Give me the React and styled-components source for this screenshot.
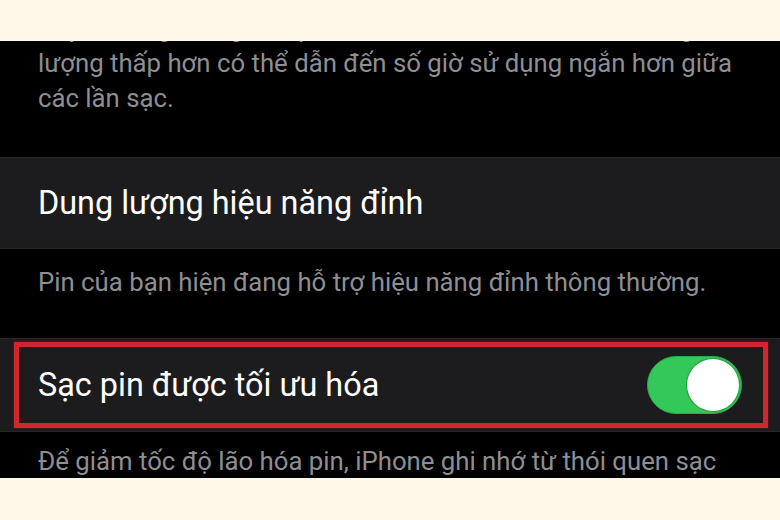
import styled, { createGlobalStyle } from "styled-components";

const GlobalStyle = createGlobalStyle`
  html, body {
    margin: 0;
    padding: 0;
    background: #fdf8e7;
  }
  * {
    box-sizing: border-box;
  }
`;

const Page = styled.div`
  width: 780px;
  height: 520px;
  display: flex;
  flex-direction: column;
  background: #fdf8e7;
  font-family: Roboto, "Noto Sans", sans-serif;
`;

const Band = styled.div`
  height: ${p => p.h}px;
  flex-shrink: 0;
  background: #fdf8e7;
`;

const Screen = styled.div`
  height: 437px;
  flex-shrink: 0;
  background: #000;
  overflow: hidden;
  display: flex;
  flex-direction: column;
`;

const Footer = styled.div`
  height: ${p => p.h}px;
  flex-shrink: 0;
  padding: ${p => p.top}px 20px 0 38px;
  color: #8e8e93;
  font-size: 25.75px;
  line-height: 35px;
  white-space: nowrap;
`;

const Clip = styled.p`
  margin: -30px 0 0;
`;

const Row = styled.div`
  height: ${p => p.h}px;
  flex-shrink: 0;
  background: #1c1c1e;
  border-top: 1px solid #262628;
  border-bottom: 1px solid #262628;
  display: flex;
  align-items: center;
  padding: 0 12px 0 ${p => (p.boxed ? 14 : 38)}px;
`;

const Highlight = styled.div`
  flex: 1;
  height: 86px;
  border: 5px solid #d0262e;
  box-shadow: 0 0 2px rgba(160, 20, 30, 0.8);
  display: flex;
  align-items: center;
  justify-content: space-between;
  padding: 0 21px 0 19px;
`;

const Title = styled.span`
  color: #fff;
  font-size: 32.4px;
`;

const Toggle = styled.div`
  width: 95px;
  height: 58px;
  border-radius: 29px;
  background: #34c759;
  border: 1px solid #2aa94a;
  display: flex;
  align-items: center;
  justify-content: flex-end;
  padding: 0 2px;
`;

const Knob = styled.div`
  width: 52px;
  height: 52px;
  border-radius: 50%;
  background: #fff;
  box-shadow: 0 0 1px 1px rgba(30, 120, 50, 0.6);
`;

export default function App() {
  return (
    <>
      <GlobalStyle />
      <Page>
        <Band h={41} />
        <Screen>
          <Footer h={116} top={0}>
            <Clip>
              Đây là dung lượng của pin so với khi còn mới. Pin có dung
              <br />
              lượng thấp hơn có thể dẫn đến số giờ sử dụng ngắn hơn giữa
              <br />
              các lần sạc.
            </Clip>
          </Footer>
          <Row h={92}>
            <Title>Dung lượng hiệu năng đỉnh</Title>
          </Row>
          <Footer h={89} top={16}>
            Pin của bạn hiện đang hỗ trợ hiệu năng đỉnh thông thường.
          </Footer>
          <Row h={94} boxed>
            <Highlight>
              <Title>Sạc pin được tối ưu hóa</Title>
              <Toggle>
                <Knob />
              </Toggle>
            </Highlight>
          </Row>
          <Footer h={46} top={12}>
            Để giảm tốc độ lão hóa pin, iPhone ghi nhớ từ thói quen sạc
          </Footer>
        </Screen>
        <Band h={42} />
      </Page>
    </>
  );
}
